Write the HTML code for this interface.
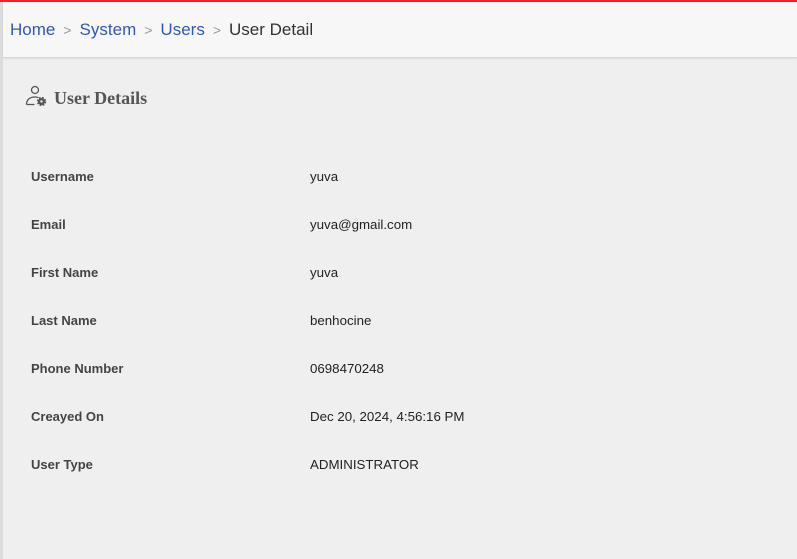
<!DOCTYPE html>
<html><head><meta charset="utf-8"><style>
*{margin:0;padding:0;box-sizing:border-box}
body{width:797px;height:559px;overflow:hidden;background:#efefef;font-family:"Liberation Sans",sans-serif;position:relative}
.top{position:absolute;left:0;top:0;width:797px;height:2px;background:#e8262a}
.lb{position:absolute;left:0;top:0;width:3px;height:559px;background:#dcdcdc}
.hdr{position:absolute;left:3px;top:2px;right:0;height:56px;background:#f7f7f7;border-bottom:1px solid #d8d8d8;box-shadow:0 1px 2px rgba(0,0,0,.08)}
.bc{position:absolute;left:10px;top:20px;font-size:17px;color:#333}
.bc a{color:#2f58b5;text-decoration:none}
.bc .s{color:#999;margin:0 8px;font-size:14px}
.title{position:absolute;left:25px;top:85px;font-family:"Liberation Serif",serif;font-weight:bold;font-size:18px;color:#555}
.title svg{position:absolute;left:0;top:0}
.title span{position:absolute;left:29px;top:3px;white-space:nowrap}
.row{position:absolute;left:31px;font-size:13px}
.l{position:absolute;left:0;font-weight:bold;color:#444;white-space:nowrap}
.v{position:absolute;left:279px;color:#222;white-space:nowrap;font-size:13.3px}
</style></head><body>
<div class="lb"></div>
<div class="hdr"></div>
<div class="top"></div>
<div class="bc"><a>Home</a><span class="s">&gt;</span><a>System</a><span class="s">&gt;</span><a>Users</a><span class="s">&gt;</span>User Detail</div>
<div class="title">
<svg width="24" height="24" viewBox="0 0 24 24" fill="none" stroke="#555" stroke-width="1.3">
<circle cx="10" cy="5" r="3.5"/>
<path d="M1.5 19.5c0-5 3.5-7.5 8.5-7.5c1.5 0 2.5.3 3.5.7"/>
<path d="M1.5 19.5h8"/>
<circle cx="16.5" cy="16.5" r="3.5" fill="#555" stroke-width="2.4" stroke-dasharray="1.6 1.2"/>
<circle cx="16.5" cy="16.5" r="1.2" fill="#efefef" stroke="none"/>
</svg><span>User Details</span></div>
<div class="row" style="top:169px"><span class="l">Username</span><span class="v">yuva</span></div>
<div class="row" style="top:217px"><span class="l">Email</span><span class="v">yuva@gmail.com</span></div>
<div class="row" style="top:265px"><span class="l">First Name</span><span class="v">yuva</span></div>
<div class="row" style="top:313px"><span class="l">Last Name</span><span class="v">benhocine</span></div>
<div class="row" style="top:361px"><span class="l">Phone Number</span><span class="v">0698470248</span></div>
<div class="row" style="top:409px"><span class="l">Creayed On</span><span class="v">Dec 20, 2024, 4:56:16 PM</span></div>
<div class="row" style="top:457px"><span class="l">User Type</span><span class="v">ADMINISTRATOR</span></div>
</body></html>
